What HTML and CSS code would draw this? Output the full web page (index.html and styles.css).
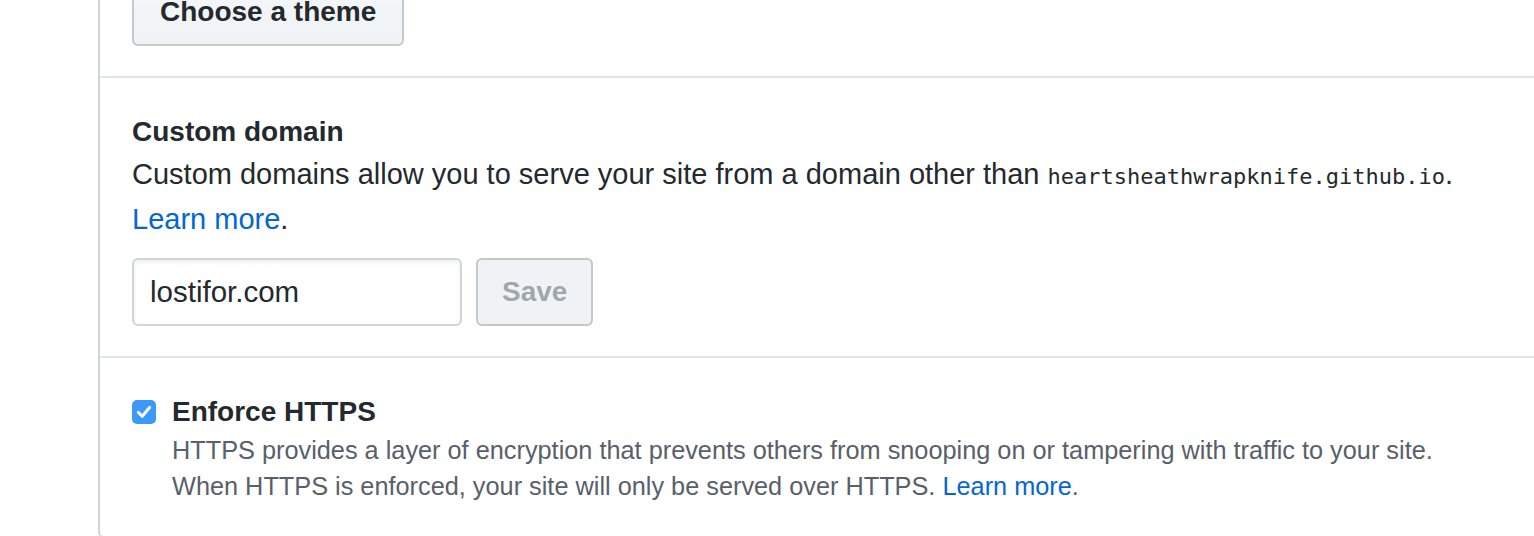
FILE: index.html
```html
<!DOCTYPE html>
<html>
<head>
<meta charset="utf-8">
<link rel="stylesheet" href="styles.css">
</head>
<body>
<div class="box">
  <div class="section section-theme">
    <button class="btn btn-theme">Choose a theme</button>
  </div>
  <div class="section section-domain">
    <h3 class="title">Custom domain</h3>
    <p class="desc">Custom domains allow you to serve your site from a domain other than <code>heartsheathwrapknife.github.io</code>. <a href="#">Learn more</a>.</p>
    <form class="domain-form">
      <input class="input" type="text" value="lostifor.com">
      <button class="btn btn-disabled" type="button">Save</button>
    </form>
  </div>
  <div class="section section-https">
    <label class="check-row">
      <span class="checkbox"><svg width="24" height="24" viewBox="0 0 24 24"><path d="M6.3 12.4l3.9 3.9 7.4-8.8" fill="none" stroke="#fff" stroke-width="3" stroke-linecap="round" stroke-linejoin="round"/></svg></span>
      <span class="check-text">
        <span class="check-title">Enforce HTTPS</span>
        <span class="note">HTTPS provides a layer of encryption that prevents others from snooping on or tampering with traffic to your site.<br>When HTTPS is enforced, your site will only be served over HTTPS. <a href="#">Learn more</a>.</span>
      </span>
    </label>
  </div>
</div>
</body>
</html>
```
FILE: styles.css
```css
html, body {
  margin: 0;
  padding: 0;
  background: #fff;
  overflow: hidden;
}
body {
  font-family: "Liberation Sans", Arial, sans-serif;
  color: #24292e;
  font-size: 28px;
  line-height: 1.5;
}
.box {
  margin-top: -22px;
  margin-left: 98px;
  width: 1600px;
  height: 560px;
  box-sizing: border-box;
  border-left: 2px solid #d1d5da;
  border-bottom: 2px solid #d1d5da;
  border-bottom-left-radius: 6px;
}
.section {
  padding: 0 32px;
  border-top: 2px solid #e1e4e8;
}
.section-theme {
  border-top: none;
  padding-bottom: 30px;
}
.btn {
  font-family: "Liberation Sans", Arial, sans-serif;
  font-size: 28px;
  font-weight: bold;
  line-height: 40px;
  color: #24292e;
  padding: 12px 24px;
  border: 2px solid rgba(27, 31, 35, 0.2);
  border-radius: 6px;
  background: linear-gradient(#f5f7f9, #eff3f6);
  display: inline-block;
  margin: 0;
}
.btn-theme {
  padding: 12px 26px;
}
.section-domain {
  padding-top: 33px;
  padding-bottom: 30px;
}
.title {
  margin: 0;
  font-size: 28px;
  font-weight: bold;
  line-height: 42px;
}
.desc {
  margin: 0;
  max-width: 1370px;
  font-size: 29px;
  line-height: 42px;
}
code {
  font-family: "DejaVu Sans Mono", "Liberation Mono", monospace;
  font-size: 22px;
}
a {
  color: #0366d6;
  text-decoration: none;
}
.domain-form {
  display: flex;
  gap: 14px;
  margin-top: 18px;
}
.input {
  width: 330px;
  height: 68px;
  box-sizing: border-box;
  border: 2px solid #d1d5da;
  border-radius: 6px;
  padding: 0 16px;
  font-family: "Liberation Sans", Arial, sans-serif;
  font-size: 29.5px;
  color: #24292e;
  box-shadow: inset 0 2px 4px rgba(27, 31, 35, 0.075);
  outline: none;
}
.btn-disabled {
  color: rgba(36, 41, 46, 0.4);
  background: #eff3f6;
  border-color: rgba(27, 31, 35, 0.2);
  height: 68px;
}
.section-https {
  padding-top: 42px;
}
.check-row {
  display: flex;
  gap: 16px;
  align-items: flex-start;
}
.checkbox {
  flex: none;
  width: 24px;
  height: 24px;
  border-radius: 5px;
  background: #3b99fc;
  display: flex;
}
.check-text {
  display: flex;
  flex-direction: column;
  margin-top: -8px;
}
.check-title {
  font-weight: bold;
  font-size: 28px;
  line-height: 40px;
}
.note {
  font-size: 25.3px;
  line-height: 36px;
  color: #586069;
}
```
